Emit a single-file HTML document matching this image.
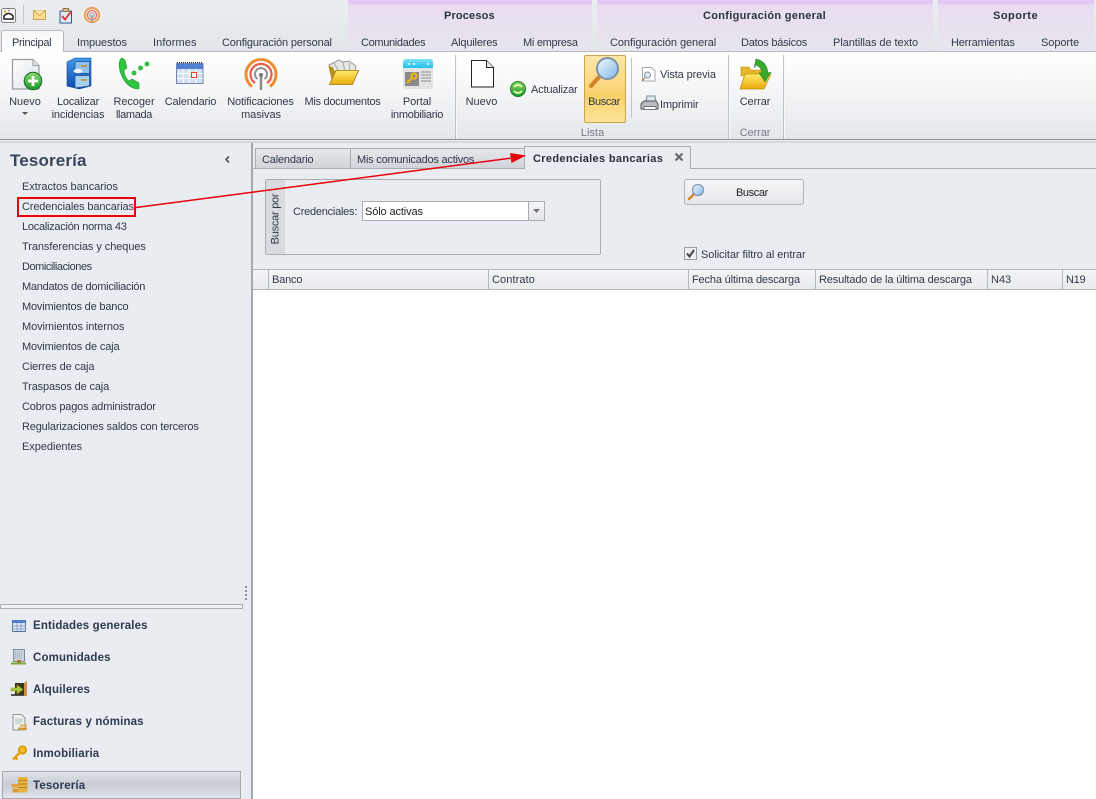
<!DOCTYPE html>
<html lang="es"><head><meta charset="utf-8"><title>Credenciales bancarias</title>
<style>
*{box-sizing:border-box}
html,body{margin:0;padding:0;width:1096px;height:799px;overflow:hidden;background:#e9ecf1}
body{position:relative;font:11px "Liberation Sans",sans-serif;color:#2f3a4a}
.a{position:absolute}
.t{position:absolute;white-space:nowrap;line-height:13px;margin-top:1px}
.c{text-align:center;transform:translateX(-50%)}
.b{font-weight:bold}
.ctx{position:absolute;top:0;height:52px;background:linear-gradient(#e6c8f6 0,#e6c8f6 4px,#e9ddf1 5px,#e8e1ee 30px,#e5e8ed 52px)}
.sep{position:absolute;top:55px;height:84px;width:1px;background:#bfc4ca;box-shadow:1px 0 0 #f7f8f9}
.hc{position:absolute;top:269px;height:21px;border-right:1px solid #b4b8be}
.nav{position:absolute;left:33px;font-weight:bold;font-size:11.5px;letter-spacing:.15px;white-space:nowrap;line-height:14px;color:#2d3a50;margin-top:1px}
svg{position:absolute;overflow:visible}
</style></head><body>

<!-- top chrome -->
<div class="a" style="left:0;top:0;width:1096px;height:52px;background:linear-gradient(#eceef1,#e2e5e9)"></div>
<div class="ctx" style="left:348px;width:244px"></div>
<div class="ctx" style="left:597px;width:336px"></div>
<div class="ctx" style="left:938px;width:156px"></div>
<div class="t b" style="left:444px;top:9px;color:#2b3240;letter-spacing:.15px">Procesos</div>
<div class="t b" style="left:703px;top:9px;color:#2b3240;letter-spacing:.3px">Configuración general</div>
<div class="t b" style="left:993px;top:9px;color:#2b3240;letter-spacing:.5px">Soporte</div>

<!-- quick access -->
<svg style="left:0;top:0" width="110" height="30" viewBox="0 0 110 30">
<rect x="1.5" y="8.5" width="14" height="14" rx="2" fill="#f7f7f7" stroke="#7d8288"/>
<path d="M4 19v-3q4.500-5 9 0v3z" fill="#fff" stroke="#222" stroke-width="1.500"/><circle cx="5" cy="11.500" r="1.300" fill="#e8a23c"/><circle cx="9" cy="10.500" r="1" fill="#999"/>
<path d="M23.500 5v19" stroke="#c4c8cd"/>
<rect x="33.500" y="10.500" width="12" height="9" fill="#fbdf8e" stroke="#caa253"/><path d="M33.500 10.500l6 5 6-5" fill="#fdeab0" stroke="#caa253"/>
<rect x="60" y="11" width="11.500" height="12" fill="#dfe8f5" stroke="#34568c"/><rect x="63" y="8.500" width="5.500" height="3" fill="#d9c08a" stroke="#8b7a50"/><path d="M62 16l3 3.500 6.500-8.500" fill="none" stroke="#d8352a" stroke-width="1.800"/>
<circle cx="92" cy="15" r="7.200" fill="none" stroke="#f09a4e" stroke-width="1.800"/><circle cx="92" cy="15" r="4.600" fill="none" stroke="#e8705a" stroke-width="1.300"/><circle cx="92" cy="15" r="2.200" fill="none" stroke="#999" stroke-width="1"/><path d="M92 15v8" stroke="#999" stroke-width="1.300"/>
</svg>

<!-- ribbon tabs -->
<div class="a" style="left:0;top:51px;width:1096px;height:1px;background:#b5b8bd"></div>
<div class="a" style="left:1px;top:30px;width:63px;height:22px;background:linear-gradient(#f7f8f9,#fff);border:1px solid #b5b8bd;border-bottom:0;border-radius:3px 3px 0 0;z-index:2"></div>
<div class="t" style="left:12px;top:36px;z-index:3;letter-spacing:-.33px">Principal</div>
<div class="t" style="left:77px;top:36px;letter-spacing:-.1px">Impuestos</div>
<div class="t" style="left:153px;top:36px;letter-spacing:.1px">Informes</div>
<div class="t" style="left:222px;top:36px;letter-spacing:-.15px">Configuración personal</div>
<div class="t" style="left:361px;top:36px;letter-spacing:-.33px">Comunidades</div>
<div class="t" style="left:451px;top:36px;letter-spacing:-.18px">Alquileres</div>
<div class="t" style="left:523px;top:36px;letter-spacing:-.28px">Mi empresa</div>
<div class="t" style="left:610px;top:36px;letter-spacing:-.07px">Configuración general</div>
<div class="t" style="left:741px;top:36px;letter-spacing:-.24px">Datos básicos</div>
<div class="t" style="left:833px;top:36px;letter-spacing:-.06px">Plantillas de texto</div>
<div class="t" style="left:951px;top:36px;letter-spacing:-.2px">Herramientas</div>
<div class="t" style="left:1041px;top:36px;letter-spacing:-.07px">Soporte</div>

<!-- ribbon body -->
<div class="a" style="left:0;top:52px;width:1096px;height:88px;background:linear-gradient(#fff 0,#fbfbfc 25%,#e4e7ea 100%);border-bottom:1px solid #8f9398"></div>
<div class="a" style="left:0;top:141px;width:1096px;height:2px;background:#d5d8dc"></div>
<div class="sep" style="left:455px"></div>
<div class="sep" style="left:728px"></div>
<div class="sep" style="left:783px"></div>

<svg style="left:0;top:52px" width="800" height="60" viewBox="0 52 800 60">
<defs>
<linearGradient id="pg" x1="0" y1="0" x2="1" y2="1"><stop offset="0" stop-color="#fff"/><stop offset="1" stop-color="#dce0e6"/></linearGradient>
<linearGradient id="gr" x1="0" y1="0" x2="0" y2="1"><stop offset="0" stop-color="#8bd765"/><stop offset="1" stop-color="#149a2f"/></linearGradient>
<linearGradient id="bl" x1="0" y1="0" x2="0" y2="1"><stop offset="0" stop-color="#3f9bec"/><stop offset="1" stop-color="#0f4aa8"/></linearGradient>
<linearGradient id="ye" x1="0" y1="0" x2="0" y2="1"><stop offset="0" stop-color="#ffec6a"/><stop offset="1" stop-color="#eaa90a"/></linearGradient>
<linearGradient id="lens" x1="0" y1="0" x2="1" y2="1"><stop offset="0" stop-color="#f4fbff"/><stop offset="1" stop-color="#7fb5e6"/></linearGradient>
<linearGradient id="cy" x1="0" y1="0" x2="0" y2="1"><stop offset="0" stop-color="#7fe3f7"/><stop offset="1" stop-color="#22bfe8"/></linearGradient>
</defs>
<!-- Nuevo -->
<path d="M12.500 59.500H33l6 6v23.500H12.500z" fill="url(#pg)" stroke="#9a9ea4" stroke-width="1.300"/><path d="M33 59.500v6h6" fill="#dfe2e6" stroke="#9a9ea4"/>
<circle cx="33" cy="81" r="8.800" fill="url(#gr)" stroke="#1d6a2b"/><path d="M33 76v10M28 81h10" stroke="#fff" stroke-width="2.800"/>
<!-- Localizar -->
<path d="M67 62l8-4h16v28l-12 3-12-3z" fill="url(#bl)" stroke="#14408a" stroke-width=".6"/>
<path d="M75 61.500h14.500v12H75z" fill="#8fc0ee" stroke="#1a4f9c" stroke-width=".7"/><path d="M75 75.500h14.500v10.500L75 88z" fill="#a8cff0" stroke="#1a4f9c" stroke-width=".7"/>
<path d="M81 66h6M81 80h6" stroke="#c28a2c" stroke-width="1.500"/><ellipse cx="78" cy="71" rx="4.500" ry="2.200" fill="#eef5fb"/>
<!-- Recoger -->
<path d="M122 58c-3 1-4 8-1 16 4 10 10 15 18 15l0-6-7-4-3 2c-3-2-5-7-5-11l3-2-2-8z" fill="#2ec43e" stroke="#1c9a2a" stroke-width=".6"/>
<circle cx="134" cy="73" r="2.500" fill="#35bf3f"/><circle cx="140.500" cy="68" r="2.500" fill="#35bf3f"/><circle cx="147" cy="64" r="2.500" fill="#35bf3f"/>
<!-- Calendario -->
<rect x="176.500" y="63.500" width="26.500" height="20" fill="#d3e0f4" stroke="#6c86ad"/><rect x="177" y="64" width="26" height="5" fill="#4f7fd1"/>
<path d="M177 62.500h26" stroke="#222" stroke-dasharray="1 1"/>
<path d="M183 69v14M189 69v14M196 69v14M177 73.500h26M177 78.500h26" stroke="#fff"/>
<rect x="191.500" y="72.500" width="5" height="5" fill="#fff" stroke="#dc4a22"/>
<!-- Notificaciones -->
<path d="M252 86.500A15 15 0 1 1 270 86.500" fill="none" stroke="#f08c32" stroke-width="3"/>
<path d="M255 83A10.500 10.500 0 1 1 267 83" fill="none" stroke="#e85c48" stroke-width="2.200"/>
<path d="M257.500 79A6 6 0 1 1 264.500 79" fill="none" stroke="#8f8f8f" stroke-width="2"/>
<path d="M261 75v15" stroke="#8a8a8a" stroke-width="2.400"/><circle cx="261" cy="75" r="2" fill="#777"/>
<!-- Mis documentos -->
<path d="M329 65l10-5 4 2 6-1 7 5-1 6h-24z" fill="#e6e6e2" stroke="#9a9a94"/><path d="M334 63l5 9M343 62l2 10M349 63l1 8" stroke="#aaa"/>
<path d="M328.500 66l4 1 2 4h24l-6 2-20 11z" fill="#b98f1c"/><path d="M336 70.500h22.500l-6 14h-23z" fill="url(#ye)" stroke="#9d7a10" stroke-width=".8"/>
<!-- Portal -->
<rect x="403" y="59" width="30" height="30" rx="3" fill="#e2e3e5"/><path d="M403 68v-6q0-3 3-3h24q3 0 3 3v6z" fill="url(#cy)"/>
<circle cx="409" cy="64" r="1" fill="#fff"/><circle cx="414" cy="64" r="1" fill="#fff"/><circle cx="428" cy="64" r="1" fill="#fff"/>
<rect x="405" y="72" width="14" height="14" fill="#8a8a8a"/>
<circle cx="414" cy="76" r="2.600" fill="none" stroke="#f2b90f" stroke-width="2"/><path d="M412 78l-5 5" stroke="#f2b90f" stroke-width="2"/>
<path d="M421 72h10M421 75h10M421 78h10M421 81h10" stroke="#8d8d8d"/>
<!-- Nuevo list -->
<path d="M471.500 60.500h15l7 7v19.500h-22z" fill="#fff" stroke="#222"/><path d="M486.500 60.500v7h7" fill="#e8e8e8" stroke="#222"/>
</svg>

<!-- Buscar highlighted -->
<div class="a" style="left:584px;top:55px;width:42px;height:68px;border:1px solid #c9a34e;border-radius:2px;background:linear-gradient(#fde7a8 0,#fbd77f 45%,#fad06a 60%,#fde49a 100%)"></div>
<svg style="left:0;top:52px" width="800" height="70" viewBox="0 52 800 70">
<path d="M599 77l-8 9" stroke="#d5812c" stroke-width="4" stroke-linecap="round"/>
<circle cx="607.500" cy="68.500" r="10.500" fill="url(#lens)" stroke="#7d94aa" stroke-width="2"/>
<!-- Actualizar -->
<circle cx="518" cy="89" r="7.500" fill="url(#gr)" stroke="#1e7a2c"/><path d="M514 87q4-4 8 0M522 91q-4 4-8 0" fill="none" stroke="#e8f7a8" stroke-width="1.800"/>
<!-- vista previa -->
<path d="M642.500 67.500h9l3.500 3.500v10h-12.500z" fill="#fff" stroke="#a5a9ae"/><circle cx="647.500" cy="75" r="3" fill="#dcebf7" stroke="#8b9199"/><path d="M645 77.500l-3 3.500" stroke="#a08450" stroke-width="1.300"/>
<!-- imprimir -->
<path d="M646 102l1-6h8l1 6z" fill="#dfe7f0" stroke="#7f8a96"/><path d="M641 104l3-3h12l2 3v5h-17z" fill="#b9bdc3" stroke="#4c525a"/><rect x="644" y="106.500" width="12" height="3" fill="#fff" stroke="#6e747c"/>
<path d="M631.500 58v60" stroke="#bfc4ca"/>
<!-- cerrar -->
<path d="M741 67h8l2 3h12v6h-22z" fill="#e6b52c" stroke="#b98a12" stroke-width=".6"/><path d="M745 74h26l-7 15h-24z" fill="url(#ye)" stroke="#c2950f" stroke-width=".8"/>
<path d="M756 59q11 2 12 14l3-1-6 10-6-9 3 0q-1-6-6-8l-2 3z" fill="#36a82e" stroke="#1e7d1c" stroke-width=".5"/>
</svg>

<!-- ribbon labels -->
<div class="t c" style="left:25px;top:95px">Nuevo</div>
<svg style="left:22px;top:112px" width="7" height="4"><path d="M0 0h6l-3 3z" fill="#555"/></svg>
<div class="t c" style="left:78px;top:95px;letter-spacing:-.22px">Localizar</div><div class="t c" style="left:78px;top:108px;letter-spacing:-.15px">incidencias</div>
<div class="t c" style="left:134px;top:95px;letter-spacing:-.07px">Recoger</div><div class="t c" style="left:134px;top:108px;letter-spacing:-.35px">llamada</div>
<div class="t c" style="left:190.500px;top:95px;letter-spacing:-.18px">Calendario</div>
<div class="t c" style="left:260.500px;top:95px;letter-spacing:-.14px">Notificaciones</div><div class="t c" style="left:261px;top:108px;letter-spacing:-.07px">masivas</div>
<div class="t c" style="left:342.500px;top:95px;letter-spacing:-.29px">Mis documentos</div>
<div class="t c" style="left:417px;top:95px;letter-spacing:-.1px">Portal</div><div class="t c" style="left:417px;top:108px;letter-spacing:-.28px">inmobiliario</div>
<div class="t c" style="left:481.500px;top:95px">Nuevo</div>
<div class="t" style="left:531px;top:83px;letter-spacing:-.18px">Actualizar</div>
<div class="t c" style="left:604px;top:95px;letter-spacing:-.4px">Buscar</div>
<div class="t" style="left:660px;top:68px;letter-spacing:-.12px">Vista previa</div>
<div class="t" style="left:660px;top:98px;letter-spacing:-.15px">Imprimir</div>
<div class="t c" style="left:755px;top:95px;letter-spacing:-.1px">Cerrar</div>
<div class="t c" style="left:592.500px;top:126px;color:#717d8c">Lista</div>
<div class="t c" style="left:755px;top:126px;color:#717d8c;letter-spacing:-.1px">Cerrar</div>

<!-- left panel -->
<div class="a" style="left:251px;top:143px;width:2px;height:656px;background:#a5a9ae"></div>
<div class="t b" style="left:10px;top:150px;font-size:17px;line-height:19px;letter-spacing:.15px;color:#39465a">Tesorería</div>
<svg style="left:224px;top:155px" width="7" height="9"><path d="M5 1.500L2 4.500 5 7.500" fill="none" stroke="#555" stroke-width="1.600"/></svg>
<div class="t" style="left:22px;top:180px;letter-spacing:-.04px">Extractos bancarios</div>
<div class="t" style="left:22px;top:200px;letter-spacing:-.14px">Credenciales bancarias</div>
<div class="t" style="left:22px;top:220px;letter-spacing:-.26px">Localización norma 43</div>
<div class="t" style="left:22px;top:240px;letter-spacing:-.07px">Transferencias y cheques</div>
<div class="t" style="left:22px;top:260px;letter-spacing:-.45px">Domiciliaciones</div>
<div class="t" style="left:22px;top:280px;letter-spacing:-.26px">Mandatos de domiciliación</div>
<div class="t" style="left:22px;top:300px;letter-spacing:-.18px">Movimientos de banco</div>
<div class="t" style="left:22px;top:320px;letter-spacing:-.08px">Movimientos internos</div>
<div class="t" style="left:22px;top:340px;letter-spacing:-.15px">Movimientos de caja</div>
<div class="t" style="left:22px;top:360px;letter-spacing:-.11px">Cierres de caja</div>
<div class="t" style="left:22px;top:380px;letter-spacing:-.14px">Traspasos de caja</div>
<div class="t" style="left:22px;top:400px;letter-spacing:-.17px">Cobros pagos administrador</div>
<div class="t" style="left:22px;top:420px;letter-spacing:-.17px">Regularizaciones saldos con terceros</div>
<div class="t" style="left:22px;top:440px;letter-spacing:-.05px">Expedientes</div>

<svg style="left:244px;top:585px" width="4" height="15"><path d="M1 1h2v2H1zM1 5h2v2H1zM1 9h2v2H1zM1 13h2v2H1z" fill="#8e9298"/></svg>
<div class="a" style="left:0;top:604px;width:243px;height:5px;background:#f0f2f5;border:1px solid #a9adb2"></div>

<div class="a" style="left:2px;top:771px;width:239px;height:28px;border:1px solid #a6aab0;background:linear-gradient(#dfe3e8,#c9ced5 45%,#d2d6dc 70%,#e2e5ea)"></div>
<div class="nav" style="top:618px">Entidades generales</div>
<div class="nav" style="top:650px">Comunidades</div>
<div class="nav" style="top:682px">Alquileres</div>
<div class="nav" style="top:714px">Facturas y nóminas</div>
<div class="nav" style="top:746px">Inmobiliaria</div>
<div class="nav" style="top:778px">Tesorería</div>

<svg style="left:0;top:610px" width="40" height="189" viewBox="0 610 40 189">
<rect x="12.500" y="620.500" width="13" height="11" fill="#dbe5f4" stroke="#5a76a0"/><rect x="12.500" y="620.500" width="13" height="2.500" fill="#4f7fd1"/><path d="M17 623v8M21 623v8M12 626h14M12 629h14" stroke="#7d95b8" stroke-width=".7"/>
<rect x="13.500" y="649.500" width="11" height="12" fill="#c9d4de" stroke="#7e8b96"/><path d="M15 652h8M15 654h8M15 656h8M15 658h8" stroke="#8fa0b0" stroke-dasharray="1 1"/><rect x="17" y="660" width="4" height="3" fill="#b7742e"/><rect x="11" y="662.500" width="15" height="2" fill="#7aa83a"/>
<rect x="11" y="694" width="15" height="2" fill="#555"/><rect x="15" y="683" width="10" height="12" fill="#2e3a24"/><path d="M27 681v15l-3 0v-13z" fill="#c98f52"/><path d="M11 688h6v-3l6 4.500-6 4.500v-3h-6z" fill="#9ccf3a" stroke="#c57f2c" stroke-width=".6"/>
<path d="M13 714.500h8.500l3.500 3.500v12H13z" fill="#eef2f0" stroke="#8a9a94"/><path d="M15 719h8M15 721h8M15 723h6" stroke="#9fb0a8" stroke-width=".8"/><rect x="20" y="724.500" width="7" height="2" fill="#dfae52"/><rect x="18" y="727.500" width="9" height="2.500" fill="#d49a3c"/>
<circle cx="22.500" cy="750" r="3.500" fill="#f3c22a" stroke="#dc9d0e" stroke-width="2.200"/><path d="M20 752.500l-7 7M15 757l2.500 2.500" stroke="#e3a310" stroke-width="2.500"/>
<rect x="11.500" y="784" width="10" height="3.500" rx="1" fill="#e0a63a"/><rect x="12.500" y="788.500" width="10" height="4" rx="1" fill="#d89a30"/><rect x="18" y="777" width="9.500" height="15.500" rx="1.500" fill="#e8b040"/><path d="M18 780.500h9.500M18 784h9.500M18 787.500h9.500" stroke="#a8741a" stroke-width=".8"/>
</svg>

<!-- document tabs -->
<div class="a" style="left:255px;top:148px;width:96px;height:21px;border:1px solid #a9adb3;border-bottom:0;background:linear-gradient(#e6e8ec,#cfd2d8)"></div>
<div class="a" style="left:351px;top:148px;width:174px;height:21px;border:1px solid #a9adb3;border-bottom:0;border-left:0;background:linear-gradient(#e6e8ec,#cfd2d8)"></div>
<div class="a" style="left:252px;top:168px;width:844px;height:1px;background:#a9adb3"></div>
<div class="a" style="left:524px;top:146px;width:167px;height:23px;border:1px solid #a9adb3;border-bottom:0;background:#e9ecf1"></div>
<div class="t" style="left:262px;top:153px;letter-spacing:-.18px">Calendario</div>
<div class="t" style="left:357px;top:153px;letter-spacing:-.22px">Mis comunicados activos</div>
<div class="t b" style="left:533px;top:152px;letter-spacing:.33px;color:#28303c">Credenciales bancarias</div>
<svg style="left:674px;top:152px" width="10" height="10"><path d="M1.500 1.500l7 7M8.500 1.500l-7 7" stroke="#666" stroke-width="2"/></svg>

<!-- filter group -->
<div class="a" style="left:265px;top:179px;width:336px;height:76px;border:1px solid #a9adb3;border-radius:2px"></div>
<div class="a" style="left:266px;top:180px;width:19px;height:74px;background:#d8dbe0"></div>
<div class="t" style="left:275.500px;top:218.500px;margin:0;letter-spacing:-.25px;transform:translate(-50%,-50%) rotate(-90deg)">Buscar por</div>
<div class="t" style="left:293px;top:205px;letter-spacing:-.24px">Credenciales:</div>
<div class="a" style="left:362px;top:201px;width:183px;height:20px;background:#fff;border:1px solid #a9adb3"></div>
<div class="a" style="left:528px;top:202px;width:16px;height:18px;background:linear-gradient(#f5f6f8,#e3e5e9);border-left:1px solid #a9adb3"></div>
<svg style="left:533px;top:209px" width="8" height="5"><path d="M0 0h7l-3.500 4z" fill="#777"/></svg>
<div class="t" style="left:365px;top:205px;color:#222;letter-spacing:-.12px">Sólo activas</div>

<!-- search button -->
<div class="a" style="left:684px;top:179px;width:120px;height:26px;border:1px solid #b0b4ba;border-radius:3px;background:linear-gradient(#f6f7f8,#e4e6ea)"></div>
<svg style="left:686px;top:182px" width="20" height="20" viewBox="0 0 20 20"><path d="M8 12l-5 5" stroke="#d5812c" stroke-width="2.500" stroke-linecap="round"/><circle cx="12" cy="8" r="5.500" fill="url(#lens)" stroke="#8499ad" stroke-width="1.300"/></svg>
<div class="t" style="left:736px;top:186px;color:#222;letter-spacing:-.4px">Buscar</div>

<!-- checkbox -->
<div class="a" style="left:684px;top:247px;width:13px;height:13px;border:1px solid #9a9ea4;background:#eceef1"></div>
<svg style="left:684px;top:247px" width="13" height="13"><path d="M3 6.500l2.500 3L10 3" fill="none" stroke="#444" stroke-width="2"/></svg>
<div class="t" style="left:701px;top:248px;letter-spacing:-.07px">Solicitar filtro al entrar</div>

<!-- grid -->
<div class="a" style="left:253px;top:269px;width:843px;height:21px;background:linear-gradient(#f3f4f6,#e9ebee);border-top:1px solid #b4b8be;border-bottom:1px solid #b4b8be"></div>
<div class="a" style="left:253px;top:290px;width:843px;height:509px;background:#fff"></div>
<div class="hc" style="left:253px;width:16px"></div>
<div class="hc" style="left:269px;width:220px"></div>
<div class="hc" style="left:489px;width:200px"></div>
<div class="hc" style="left:689px;width:127px"></div>
<div class="hc" style="left:816px;width:172px"></div>
<div class="hc" style="left:988px;width:75px"></div>
<div class="t" style="left:272px;top:273px;letter-spacing:-.18px">Banco</div>
<div class="t" style="left:492px;top:273px;letter-spacing:.1px">Contrato</div>
<div class="t" style="left:692px;top:273px;letter-spacing:-.16px">Fecha última descarga</div>
<div class="t" style="left:819px;top:273px;letter-spacing:-.14px">Resultado de la última descarga</div>
<div class="t" style="left:991px;top:273px">N43</div>
<div class="t" style="left:1066px;top:273px;letter-spacing:-.3px">N19</div>

<!-- annotation -->
<div class="a" style="left:17px;top:197px;width:119px;height:20px;border:2px solid #e8000b"></div>
<svg style="left:0;top:0;z-index:5" width="1096" height="799" viewBox="0 0 1096 799">
<path d="M136 207.500L512 158" stroke="#e8000b" stroke-width="1.500" fill="none"/>
<path d="M526 155.500l-16-2.500 1.500 10z" fill="#e8000b"/>
</svg>
</body></html>
